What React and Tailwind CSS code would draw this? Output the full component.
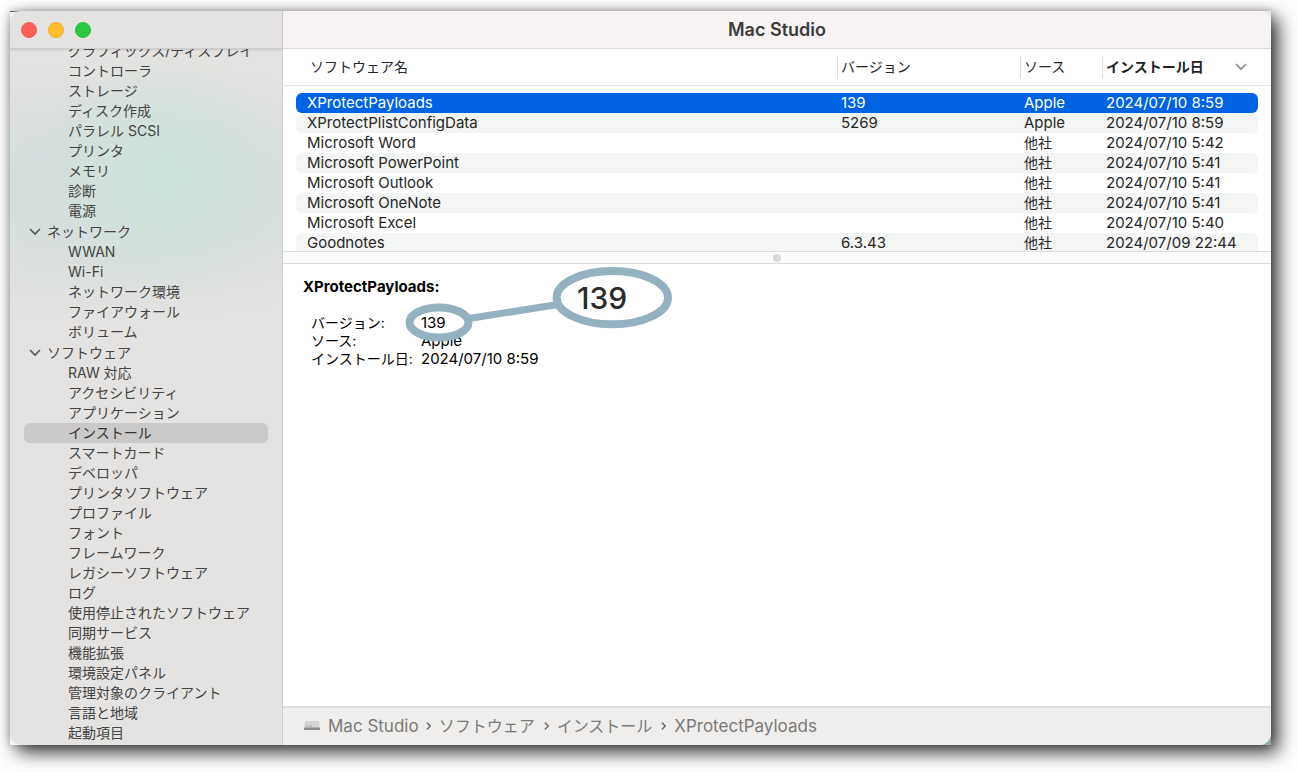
const nav = [
  { items: ['グラフィックス/ディスプレイ', 'コントローラ', 'ストレージ', 'ディスク作成', 'パラレル SCSI', 'プリンタ', 'メモリ', '診断', '電源'] },
  { title: 'ネットワーク', items: ['WWAN', 'Wi-Fi', 'ネットワーク環境', 'ファイアウォール', 'ボリューム'] },
  {
    title: 'ソフトウェア',
    items: ['RAW 対応', 'アクセシビリティ', 'アプリケーション', 'インストール', 'スマートカード', 'デベロッパ', 'プリンタソフトウェア', 'プロファイル', 'フォント', 'フレームワーク', 'レガシーソフトウェア', 'ログ', '使用停止されたソフトウェア', '同期サービス', '機能拡張', '環境設定パネル', '管理対象のクライアント', '言語と地域', '起動項目'],
  },
];

const rows = [
  ['XProtectPayloads', '139', 'Apple', '2024/07/10 8:59'],
  ['XProtectPlistConfigData', '5269', 'Apple', '2024/07/10 8:59'],
  ['Microsoft Word', '', '他社', '2024/07/10 5:42'],
  ['Microsoft PowerPoint', '', '他社', '2024/07/10 5:41'],
  ['Microsoft Outlook', '', '他社', '2024/07/10 5:41'],
  ['Microsoft OneNote', '', '他社', '2024/07/10 5:41'],
  ['Microsoft Excel', '', '他社', '2024/07/10 5:40'],
  ['Goodnotes', '6.3.43', '他社', '2024/07/09 22:44'],
];

const path = [
  { label: 'Mac Studio', className: 'text-[17px]' },
  { label: 'ソフトウェア', className: 'pr-[2px] text-base' },
  { label: 'インストール', className: 'pr-[2px] text-base' },
  { label: 'XProtectPayloads', className: 'text-[17px]' },
];

function Chevron({ className }) {
  return (
    <svg viewBox="0 0 12 8" aria-hidden="true" className={className}>
      <path d="M1.500 1.500 6 6.200l4.500-4.700" fill="none" stroke="currentColor" strokeWidth="1.700" strokeLinecap="round" strokeLinejoin="round" />
    </svg>
  );
}

function Sidebar() {
  return (
    <aside className="flex w-[273px] shrink-0 flex-col border-r border-[#d0cfce] bg-[#e4e3e1] bg-[radial-gradient(ellipse_130px_120px_at_155px_165px,#cce4db_0%,#d0e2db99_50%,#d3dddd00_100%),radial-gradient(ellipse_320px_130px_at_110px_180px,#d3dddd_0%,#d8dfde_50%,#e4e3e100_100%)]">
      <div className="flex h-[38px] shrink-0 items-center gap-[11px] border-b border-[#cfcecd] bg-[#e4e3e1] pl-[11px] shadow-[0_1px_2px_rgba(0,0,0,0.12)]">
        <button type="button" aria-label="閉じる" className="size-4 rounded-full border border-[#f0584f] bg-[#ff5f57]" />
        <button type="button" aria-label="しまう" className="size-4 rounded-full border border-[#eeb02c] bg-[#febc2e]" />
        <button type="button" aria-label="拡大" className="size-4 rounded-full border border-[#26bd3c] bg-[#28c840]" />
      </div>
      <nav className="overflow-hidden text-sm text-[#444443]">
        <div className="-mt-2">
          {nav.map((group, i) => (
            <section key={i}>
              {group.title && (
                <button type="button" className="mt-px flex h-5 w-full items-center gap-[6px] pl-[19px] leading-5">
                  <Chevron className="h-2 w-3 text-[#5c5c5b]" />
                  {group.title}
                </button>
              )}
              <ul>
                {group.items.map((item) => (
                  <li key={item} className="px-[14px]">
                    <a
                      href="#"
                      className={`block h-5 whitespace-nowrap rounded-md pl-[44px] leading-5 ${item === 'インストール' ? 'bg-[#cbcac9] text-[#333332]' : ''}`}
                    >
                      {item}
                    </a>
                  </li>
                ))}
              </ul>
            </section>
          ))}
        </div>
      </nav>
    </aside>
  );
}

function HeaderCell({ label, divider, bold, sorted }) {
  return (
    <th scope="col" className="h-11 p-0 text-left align-top text-sm font-normal">
      <div className={`mt-[7px] flex h-[22px] items-center justify-between ${divider ? 'border-l border-[#dcdcdc] pl-[3px]' : 'pl-[14px]'} ${bold ? 'font-semibold text-[#222]' : ''}`}>
        {label}
        {sorted && <Chevron className="mr-[11px] h-2 w-3 text-[#8c8c8c]" />}
      </div>
    </th>
  );
}

function SoftwareTable() {
  return (
    <div className="h-[203px] overflow-hidden border-b border-[#dcdcdc] bg-[linear-gradient(#e3e3e3,#e3e3e3)] bg-[length:100%_1px] bg-[position:0_36px] bg-no-repeat px-[13px]">
      <table className="w-full table-fixed border-separate border-spacing-0 text-[15px] text-[#262626]">
        <colgroup>
          <col />
          <col className="w-[183px]" />
          <col className="w-[82px]" />
          <col className="w-[156px]" />
        </colgroup>
        <thead>
          <tr>
            <HeaderCell label="ソフトウェア名" />
            <HeaderCell label="バージョン" divider />
            <HeaderCell label="ソース" divider />
            <HeaderCell label="インストール日" divider bold sorted />
          </tr>
        </thead>
        <tbody>
          {rows.map((row, r) => (
            <tr key={row[0]} className={r === 0 ? 'text-white' : ''}>
              {row.map((cell, c) => (
                <td
                  key={c}
                  className={`h-5 whitespace-nowrap p-0 leading-5 ${c === 0 ? 'rounded-l-md pl-[11px]' : 'pl-1'} ${c === 3 ? 'rounded-r-md' : ''} ${cell === '他社' ? 'text-sm leading-5' : ''} ${r === 0 ? 'bg-[#0063e1]' : r % 2 ? 'bg-[#f4f5f5]' : ''}`}
                >
                  {cell}
                </td>
              ))}
            </tr>
          ))}
        </tbody>
      </table>
    </div>
  );
}

function Detail() {
  return (
    <section className="relative flex-1 bg-white pl-5 pt-[14px] text-[15px] text-black">
      <h2 className="font-bold leading-[18px]">XProtectPayloads:</h2>
      <dl className="mt-[18px] grid auto-rows-[18px] grid-cols-[110px_auto] justify-start pl-2 leading-[18px]">
        <dt className="text-sm leading-[18px]">バージョン:</dt>
        <dd>139</dd>
        <dt className="text-sm leading-[18px]">ソース:</dt>
        <dd>Apple</dd>
        <dt className="text-sm leading-[18px]">インストール日:</dt>
        <dd>2024/07/10 8:59</dd>
      </dl>
      <svg viewBox="0 0 272 80" role="img" aria-label="139" className="absolute left-[120px] top-px h-20 w-[272px]">
        <path d="M66 53.500 155 39.500" stroke="#94b1c0" strokeWidth="7" />
        <ellipse cx="36" cy="57.500" rx="29.500" ry="15" fill="none" stroke="#94b1c0" strokeWidth="8" />
        <ellipse cx="209.300" cy="32.700" rx="55.700" ry="26.600" fill="#fff" stroke="#94b1c0" strokeWidth="8" />
        <text x="174" y="44" fontSize="30" fill="#2b2b2b" fontWeight="500">139</text>
      </svg>
    </section>
  );
}

function PathBar() {
  return (
    <footer className="flex h-[39px] shrink-0 items-center border-t-2 border-[#dddddc] bg-[#efeeec] pb-[2px] pl-5 text-[#7b7a79]">
      <svg viewBox="0 0 18 12" aria-hidden="true" className="mr-[7px] h-3 w-[18px]">
        <path d="M2 1h14l1 7H1z" fill="#d3d4d5" />
        <rect x="1" y="7.500" width="16" height="2.500" rx="0.600" fill="#8a8c8e" />
        <path d="M3 6h6" stroke="#77797b" strokeWidth="0.800" strokeDasharray="1 .7" />
      </svg>
      {path.map(({ label, className }, i) => (
        <span key={label} className="flex items-center leading-6">
          {i > 0 && (
            <svg viewBox="0 0 6 10" aria-hidden="true" className="mx-[7px] h-[10px] w-[6px]">
              <path d="m1.300 2 3 3-3 3" fill="none" stroke="#6b6a69" strokeWidth="1.500" strokeLinecap="round" strokeLinejoin="round" />
            </svg>
          )}
          <span className={className}>{label}</span>
        </span>
      ))}
    </footer>
  );
}

export default function App() {
  return (
    <div className="flex min-h-screen bg-white pb-[27px] pl-[10px] pr-[27px] pt-[11px] font-['Inter','Noto_Sans_CJK_JP',sans-serif]">
      <div className="flex min-w-0 flex-1 bg-[linear-gradient(90deg,#3f4a4a,#3f4a4a00),linear-gradient(135deg,#f4f4f4_60%,#8fabae_90%)] bg-[length:14px_1px,100%_100%] bg-no-repeat shadow-[0_0_8px_rgba(0,0,0,0.25),7px_7px_18px_rgba(0,0,0,0.8)]">
        <div className="flex min-w-0 flex-1 overflow-hidden rounded-xl">
          <Sidebar />
          <main className="flex min-w-0 flex-1 flex-col bg-white">
            <header className="flex h-[38px] shrink-0 items-center justify-center border-b border-[#dedcdb] bg-[#f6f3f2]">
              <h1 className="text-lg font-semibold leading-6 text-[#3c3b3b]">Mac Studio</h1>
            </header>
            <SoftwareTable />
            <div className="flex h-3 shrink-0 items-center justify-center border-b border-[#dcdcdc] bg-[#fcfcfc]">
              <span className="size-2 rounded-full bg-[#d9d9d9]" />
            </div>
            <Detail />
            <PathBar />
          </main>
        </div>
      </div>
    </div>
  );
}
